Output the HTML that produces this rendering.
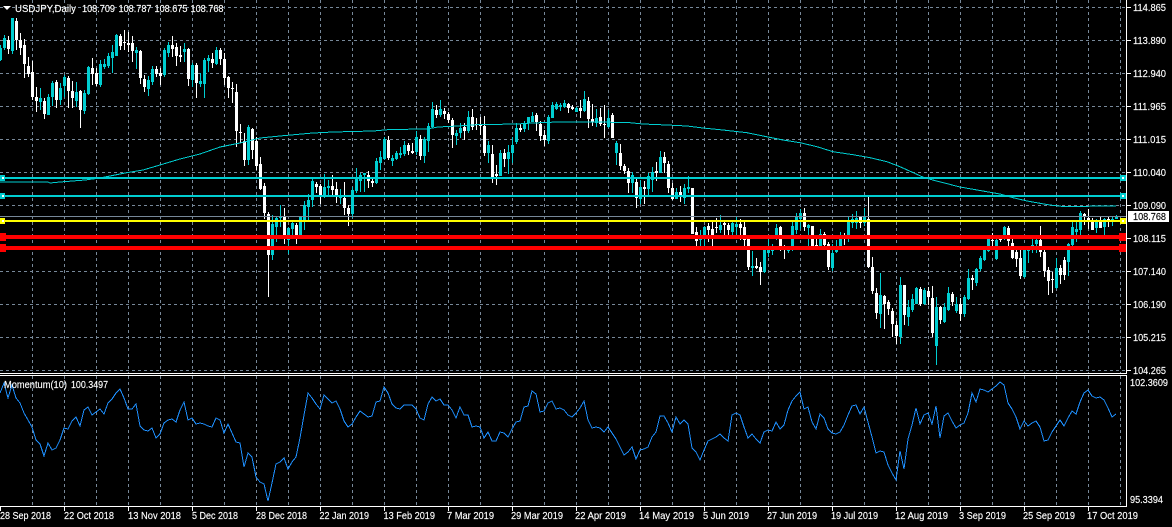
<!DOCTYPE html>
<html><head><meta charset="utf-8"><title>USDJPY,Daily</title>
<style>
html,body{margin:0;padding:0;background:#000;overflow:hidden}
svg{display:block}
.g path{stroke:#778899;stroke-width:1;stroke-dasharray:3 3;fill:none}
.k{shape-rendering:crispEdges}
.k path{fill:#fff}
.k path.c{fill:#00CED1}
text{font-family:"Liberation Sans",sans-serif;font-size:10.5px;fill:#fff;stroke:#fff;stroke-width:.15}
</style></head><body>
<svg xmlns="http://www.w3.org/2000/svg" width="1172" height="527" viewBox="0 0 1172 527">
<rect width="1172" height="527" fill="#000"/>
<g class="g" shape-rendering="crispEdges">
<path d="M0 7.5H1126M0 40.5H1126M0 73.5H1126M0 106.5H1126M0 139.5H1126M0 172.5H1126M0 205.5H1126M0 238.5H1126M0 271.5H1126M0 304.5H1126M0 337.5H1126M0 370.5H1126"/>
<path d="M32.5 0V373M64.5 0V373M96.5 0V373M128.5 0V373M160.5 0V373M192.5 0V373M224.5 0V373M256.5 0V373M288.5 0V373M320.5 0V373M352.5 0V373M384.5 0V373M416.5 0V373M448.5 0V373M480.5 0V373M512.5 0V373M544.5 0V373M576.5 0V373M608.5 0V373M640.5 0V373M672.5 0V373M704.5 0V373M736.5 0V373M768.5 0V373M800.5 0V373M832.5 0V373M864.5 0V373M896.5 0V373M928.5 0V373M960.5 0V373M992.5 0V373M1024.5 0V373M1056.5 0V373M1088.5 0V373M1120.5 0V373"/>
<path d="M32.5 376V506M64.5 376V506M96.5 376V506M128.5 376V506M160.5 376V506M192.5 376V506M224.5 376V506M256.5 376V506M288.5 376V506M320.5 376V506M352.5 376V506M384.5 376V506M416.5 376V506M448.5 376V506M480.5 376V506M512.5 376V506M544.5 376V506M576.5 376V506M608.5 376V506M640.5 376V506M672.5 376V506M704.5 376V506M736.5 376V506M768.5 376V506M800.5 376V506M832.5 376V506M864.5 376V506M896.5 376V506M928.5 376V506M960.5 376V506M992.5 376V506M1024.5 376V506M1056.5 376V506M1088.5 376V506M1120.5 376V506"/>
</g>
<g class="k">
<path class="c" d="M0 45h1V61h-1zM-1 48h3V60h-3zM4 35h1V50h-1zM3 38h3V48h-3z"/>
<path d="M8 36h1V54h-1zM7 40h3V49h-3z"/>
<path class="c" d="M12 18h1V54h-1zM11 18h3V51h-3z"/>
<path d="M16 18h1V50h-1zM15 21h3V40h-3zM20 33h1V55h-1zM19 40h3V48h-3zM24 39h1V78h-1zM23 45h3V64h-3zM28 57h1V77h-1zM27 66h3V74h-3zM32 61h1V100h-1zM31 72h3V97h-3zM36 87h1V112h-1zM35 97h3V101h-3z"/>
<path class="c" d="M40 88h1V110h-1zM39 98h3V102h-3z"/>
<path d="M44 98h1V119h-1zM43 101h3V114h-3z"/>
<path class="c" d="M48 94h1V115h-1zM47 97h3V115h-3zM52 81h1V106h-1zM51 83h3V97h-3z"/>
<path d="M56 80h1V108h-1zM55 82h3V100h-3z"/>
<path class="c" d="M60 83h1V105h-1zM59 88h3V100h-3zM64 75h1V97h-1zM63 77h3V86h-3z"/>
<path d="M68 76h1V108h-1zM67 78h3V91h-3zM72 81h1V108h-1zM71 91h3V98h-3z"/>
<path class="c" d="M76 82h1V107h-1zM75 92h3V101h-3z"/>
<path d="M80 90h1V128h-1zM79 91h3V110h-3z"/>
<path class="c" d="M84 90h1V114h-1zM83 93h3V111h-3zM88 66h1V95h-1zM87 67h3V94h-3z"/>
<path d="M92 58h1V85h-1zM91 68h3V74h-3zM96 68h1V86h-1zM95 73h3V84h-3z"/>
<path class="c" d="M100 60h1V87h-1zM99 64h3V85h-3zM104 59h1V69h-1zM103 64h3V67h-3zM108 53h1V68h-1zM107 56h3V66h-3zM112 45h1V73h-1zM111 52h3V58h-3zM116 34h1V56h-1zM115 35h3V56h-3z"/>
<path d="M120 34h1V50h-1zM119 36h3V46h-3zM124 30h1V50h-1zM123 42h3V43h-3zM128 32h1V52h-1zM127 43h3V45h-3zM132 36h1V62h-1zM131 43h3V51h-3z"/>
<path class="c" d="M136 47h1V69h-1zM135 50h3V53h-3z"/>
<path d="M140 50h1V84h-1zM139 51h3V78h-3zM144 75h1V92h-1zM143 79h3V87h-3z"/>
<path class="c" d="M148 76h1V96h-1zM147 80h3V89h-3zM152 66h1V85h-1zM151 69h3V82h-3z"/>
<path d="M156 66h1V77h-1zM155 69h3V74h-3zM160 68h1V85h-1zM159 73h3V76h-3z"/>
<path class="c" d="M164 48h1V77h-1zM163 50h3V75h-3zM168 42h1V57h-1zM167 45h3V53h-3z"/>
<path d="M172 36h1V57h-1zM171 45h3V49h-3zM176 43h1V66h-1zM175 47h3V56h-3zM180 46h1V62h-1zM179 55h3V57h-3z"/>
<path class="c" d="M184 43h1V62h-1zM183 49h3V52h-3z"/>
<path d="M188 48h1V86h-1zM187 49h3V79h-3z"/>
<path class="c" d="M192 63h1V87h-1zM191 65h3V80h-3z"/>
<path d="M196 63h1V98h-1zM195 65h3V83h-3z"/>
<path class="c" d="M200 73h1V87h-1zM199 81h3V84h-3zM204 58h1V98h-1zM203 60h3V84h-3zM208 55h1V72h-1zM207 58h3V61h-3z"/>
<path d="M212 53h1V68h-1zM211 59h3V63h-3z"/>
<path class="c" d="M216 47h1V65h-1zM215 50h3V64h-3z"/>
<path d="M220 48h1V65h-1zM219 50h3V59h-3zM224 53h1V85h-1zM223 59h3V78h-3zM228 76h1V98h-1zM227 77h3V88h-3zM232 82h1V103h-1zM231 88h3V89h-3zM236 84h1V147h-1zM235 92h3V131h-3zM240 124h1V143h-1zM239 132h3V133h-3zM244 133h1V166h-1zM243 141h3V160h-3z"/>
<path class="c" d="M248 125h1V165h-1zM247 127h3V160h-3z"/>
<path d="M252 128h1V159h-1zM251 129h3V150h-3zM256 137h1V170h-1zM255 141h3V166h-3zM260 157h1V190h-1zM259 164h3V189h-3zM264 183h1V219h-1zM263 186h3V213h-3zM268 212h1V297h-1zM267 214h3V255h-3z"/>
<path class="c" d="M272 215h1V260h-1zM271 224h3V255h-3zM276 217h1V242h-1zM275 218h3V227h-3zM280 205h1V227h-1zM279 216h3V218h-3z"/>
<path d="M284 208h1V244h-1zM283 217h3V239h-3z"/>
<path class="c" d="M288 227h1V254h-1zM287 228h3V240h-3zM292 222h1V238h-1zM291 223h3V229h-3z"/>
<path d="M296 223h1V244h-1zM295 225h3V239h-3z"/>
<path class="c" d="M300 217h1V239h-1zM299 217h3V238h-3zM304 201h1V230h-1zM303 205h3V220h-3zM308 194h1V220h-1zM307 200h3V207h-3zM312 179h1V207h-1zM311 181h3V200h-3z"/>
<path d="M316 182h1V193h-1zM315 184h3V187h-3zM320 184h1V204h-1zM319 186h3V197h-3z"/>
<path class="c" d="M324 174h1V198h-1zM323 187h3V197h-3zM328 180h1V195h-1zM327 186h3V188h-3z"/>
<path d="M332 175h1V195h-1zM331 186h3V190h-3zM336 182h1V203h-1zM335 189h3V197h-3z"/>
<path class="c" d="M340 189h1V204h-1zM339 197h3V198h-3z"/>
<path d="M344 182h1V215h-1zM343 198h3V208h-3zM348 205h1V226h-1zM347 208h3V214h-3z"/>
<path class="c" d="M352 187h1V218h-1zM351 190h3V214h-3zM356 168h1V193h-1zM355 178h3V191h-3zM360 173h1V192h-1zM359 175h3V181h-3zM364 173h1V192h-1zM363 173h3V175h-3z"/>
<path d="M368 171h1V188h-1zM367 175h3V181h-3zM372 177h1V187h-1zM371 181h3V183h-3z"/>
<path class="c" d="M376 158h1V184h-1zM375 161h3V183h-3zM380 151h1V170h-1zM379 157h3V163h-3zM384 137h1V160h-1zM383 139h3V159h-3z"/>
<path d="M388 136h1V160h-1zM387 140h3V158h-3z"/>
<path class="c" d="M392 155h1V166h-1zM391 158h3V161h-3zM396 151h1V160h-1zM395 153h3V159h-3zM400 147h1V158h-1zM399 153h3V155h-3zM404 141h1V156h-1zM403 145h3V154h-3z"/>
<path d="M408 143h1V155h-1zM407 145h3V151h-3zM412 143h1V154h-1zM411 151h3V153h-3z"/>
<path class="c" d="M416 131h1V155h-1zM415 137h3V152h-3z"/>
<path d="M420 135h1V160h-1zM419 139h3V156h-3z"/>
<path class="c" d="M424 137h1V163h-1zM423 139h3V156h-3zM428 123h1V152h-1zM427 126h3V141h-3zM432 102h1V128h-1zM431 109h3V127h-3z"/>
<path d="M436 105h1V118h-1zM435 110h3V115h-3z"/>
<path class="c" d="M440 100h1V117h-1zM439 109h3V115h-3z"/>
<path d="M444 108h1V119h-1zM443 111h3V114h-3zM448 112h1V123h-1zM447 114h3V120h-3zM452 118h1V148h-1zM451 120h3V135h-3z"/>
<path class="c" d="M456 130h1V145h-1zM455 133h3V136h-3zM460 123h1V138h-1zM459 128h3V133h-3z"/>
<path d="M464 123h1V140h-1zM463 127h3V131h-3z"/>
<path class="c" d="M468 111h1V133h-1zM467 117h3V131h-3z"/>
<path d="M472 109h1V130h-1zM471 117h3V127h-3zM476 118h1V130h-1zM475 124h3V125h-3zM480 117h1V135h-1zM479 125h3V126h-3zM484 116h1V156h-1zM483 126h3V153h-3z"/>
<path class="c" d="M488 141h1V163h-1zM487 145h3V153h-3z"/>
<path d="M492 145h1V183h-1zM491 154h3V178h-3zM496 165h1V185h-1zM495 174h3V176h-3z"/>
<path class="c" d="M500 150h1V176h-1zM499 153h3V176h-3z"/>
<path d="M504 149h1V167h-1zM503 153h3V159h-3z"/>
<path class="c" d="M508 145h1V174h-1zM507 152h3V159h-3zM512 137h1V163h-1zM511 145h3V153h-3zM516 123h1V144h-1zM515 128h3V142h-3z"/>
<path d="M520 124h1V132h-1zM519 128h3V130h-3z"/>
<path class="c" d="M524 121h1V132h-1zM523 123h3V129h-3zM528 117h1V130h-1zM527 117h3V123h-3zM532 112h1V122h-1zM531 116h3V122h-3z"/>
<path d="M536 113h1V131h-1zM535 115h3V122h-3zM540 121h1V141h-1zM539 124h3V136h-3zM544 130h1V146h-1zM543 135h3V140h-3z"/>
<path class="c" d="M548 115h1V144h-1zM547 117h3V141h-3zM552 102h1V118h-1zM551 105h3V118h-3zM556 102h1V110h-1zM555 104h3V109h-3zM560 103h1V111h-1zM559 105h3V107h-3zM564 100h1V108h-1zM563 103h3V107h-3z"/>
<path d="M568 103h1V113h-1zM567 104h3V108h-3zM572 105h1V110h-1zM571 107h3V109h-3z"/>
<path class="c" d="M576 107h1V112h-1zM575 108h3V112h-3z"/>
<path d="M580 100h1V118h-1zM579 108h3V111h-3z"/>
<path class="c" d="M584 91h1V112h-1zM583 99h3V111h-3z"/>
<path d="M588 97h1V128h-1zM587 101h3V119h-3zM592 104h1V126h-1zM591 119h3V122h-3z"/>
<path class="c" d="M596 109h1V127h-1zM595 118h3V123h-3z"/>
<path d="M600 108h1V126h-1zM599 117h3V124h-3zM604 105h1V138h-1zM603 124h3V125h-3z"/>
<path class="c" d="M608 110h1V128h-1zM607 118h3V127h-3z"/>
<path d="M612 113h1V138h-1zM611 115h3V138h-3z"/>
<path class="c" d="M616 141h1V165h-1zM615 143h3V153h-3z"/>
<path d="M620 144h1V170h-1zM619 153h3V166h-3zM624 164h1V174h-1zM623 166h3V171h-3zM628 168h1V193h-1zM627 171h3V183h-3z"/>
<path class="c" d="M632 172h1V193h-1zM631 175h3V183h-3z"/>
<path d="M636 179h1V208h-1zM635 182h3V198h-3z"/>
<path class="c" d="M640 180h1V204h-1zM639 187h3V199h-3z"/>
<path d="M644 181h1V204h-1zM643 187h3V189h-3z"/>
<path class="c" d="M648 173h1V195h-1zM647 176h3V189h-3zM652 167h1V192h-1zM651 172h3V180h-3z"/>
<path d="M656 162h1V181h-1zM655 171h3V173h-3z"/>
<path class="c" d="M660 151h1V173h-1zM659 157h3V173h-3z"/>
<path d="M664 152h1V173h-1zM663 157h3V163h-3zM668 161h1V193h-1zM667 164h3V188h-3zM672 183h1V200h-1zM671 188h3V199h-3z"/>
<path class="c" d="M676 188h1V199h-1zM675 192h3V199h-3z"/>
<path d="M680 186h1V202h-1zM679 192h3V197h-3z"/>
<path class="c" d="M684 184h1V204h-1zM683 188h3V198h-3zM688 176h1V193h-1zM687 187h3V189h-3z"/>
<path d="M692 188h1V234h-1zM691 188h3V234h-3zM696 227h1V247h-1zM695 232h3V241h-3z"/>
<path class="c" d="M700 230h1V248h-1zM699 237h3V240h-3zM704 226h1V250h-1zM703 227h3V239h-3z"/>
<path d="M708 223h1V242h-1zM707 226h3V230h-3zM712 222h1V247h-1zM711 229h3V238h-3zM716 218h1V233h-1zM715 227h3V228h-3z"/>
<path class="c" d="M720 215h1V233h-1zM719 225h3V230h-3z"/>
<path d="M724 222h1V236h-1zM723 223h3V225h-3zM728 223h1V239h-1zM727 225h3V230h-3z"/>
<path class="c" d="M732 222h1V238h-1zM731 223h3V232h-3zM736 217h1V235h-1zM735 224h3V227h-3z"/>
<path d="M740 219h1V240h-1zM739 224h3V228h-3zM744 220h1V247h-1zM743 227h3V240h-3zM748 237h1V270h-1zM747 239h3V267h-3z"/>
<path class="c" d="M752 251h1V276h-1zM751 266h3V268h-3z"/>
<path d="M756 258h1V269h-1zM755 266h3V268h-3zM760 262h1V285h-1zM759 267h3V272h-3z"/>
<path class="c" d="M764 247h1V273h-1zM763 249h3V272h-3zM768 237h1V257h-1zM767 250h3V253h-3zM772 244h1V255h-1zM771 246h3V251h-3zM776 224h1V240h-1zM775 228h3V239h-3z"/>
<path d="M780 226h1V251h-1zM779 227h3V247h-3zM784 245h1V259h-1zM783 246h3V249h-3z"/>
<path class="c" d="M788 247h1V253h-1zM787 248h3V251h-3zM792 220h1V251h-1zM791 226h3V250h-3zM796 213h1V234h-1zM795 217h3V230h-3zM800 209h1V229h-1zM799 213h3V219h-3z"/>
<path d="M804 208h1V231h-1zM803 213h3V227h-3z"/>
<path class="c" d="M808 224h1V248h-1zM807 225h3V228h-3z"/>
<path d="M812 226h1V250h-1zM811 226h3V247h-3zM816 238h1V250h-1zM815 245h3V246h-3z"/>
<path class="c" d="M820 229h1V249h-1zM819 234h3V247h-3z"/>
<path d="M824 232h1V250h-1zM823 234h3V245h-3zM828 242h1V270h-1zM827 244h3V267h-3z"/>
<path class="c" d="M832 244h1V271h-1zM831 253h3V268h-3zM836 240h1V253h-1zM835 247h3V252h-3zM840 232h1V249h-1zM839 235h3V248h-3z"/>
<path d="M844 233h1V245h-1zM843 235h3V237h-3z"/>
<path class="c" d="M848 217h1V242h-1zM847 221h3V239h-3zM852 214h1V228h-1zM851 219h3V223h-3zM856 211h1V229h-1zM855 218h3V223h-3z"/>
<path d="M860 216h1V228h-1zM859 216h3V223h-3z"/>
<path class="c" d="M864 208h1V226h-1zM863 216h3V223h-3z"/>
<path d="M868 197h1V268h-1zM867 219h3V267h-3zM872 257h1V294h-1zM871 267h3V291h-3zM876 288h1V319h-1zM875 293h3V313h-3z"/>
<path class="c" d="M880 273h1V328h-1zM879 295h3V314h-3z"/>
<path d="M884 295h1V329h-1zM883 296h3V304h-3zM888 300h1V315h-1zM887 302h3V309h-3zM892 308h1V337h-1zM891 311h3V324h-3zM896 321h1V344h-1zM895 325h3V336h-3z"/>
<path class="c" d="M900 277h1V344h-1zM899 285h3V337h-3z"/>
<path d="M904 285h1V325h-1zM903 285h3V315h-3z"/>
<path class="c" d="M908 300h1V326h-1zM907 307h3V317h-3zM912 294h1V312h-1zM911 299h3V310h-3zM916 287h1V304h-1zM915 288h3V304h-3z"/>
<path d="M920 287h1V306h-1zM919 289h3V304h-3z"/>
<path class="c" d="M924 288h1V305h-1zM923 290h3V304h-3z"/>
<path d="M928 287h1V305h-1zM927 291h3V297h-3zM932 286h1V337h-1zM931 298h3V333h-3z"/>
<path class="c" d="M936 297h1V365h-1zM935 307h3V346h-3z"/>
<path d="M940 306h1V324h-1zM939 307h3V320h-3z"/>
<path class="c" d="M944 303h1V323h-1zM943 307h3V322h-3zM948 287h1V311h-1zM947 293h3V310h-3z"/>
<path d="M952 292h1V306h-1zM951 294h3V302h-3z"/>
<path class="c" d="M956 297h1V313h-1zM955 304h3V311h-3z"/>
<path d="M960 298h1V321h-1zM959 304h3V314h-3z"/>
<path class="c" d="M964 295h1V317h-1zM963 297h3V314h-3zM968 269h1V300h-1zM967 278h3V299h-3z"/>
<path d="M972 275h1V290h-1zM971 278h3V280h-3z"/>
<path class="c" d="M976 268h1V286h-1zM975 269h3V283h-3zM980 256h1V271h-1zM979 258h3V269h-3zM984 248h1V261h-1zM983 249h3V260h-3zM988 235h1V252h-1zM987 238h3V251h-3z"/>
<path d="M992 233h1V247h-1zM991 240h3V241h-3z"/>
<path class="c" d="M996 237h1V260h-1zM995 240h3V259h-3z"/>
<path d="M1000 236h1V242h-1zM999 238h3V240h-3z"/>
<path class="c" d="M1004 226h1V240h-1zM1003 227h3V239h-3z"/>
<path d="M1008 226h1V250h-1zM1007 228h3V241h-3zM1012 239h1V259h-1zM1011 243h3V258h-3zM1016 250h1V267h-1zM1015 252h3V259h-3zM1020 250h1V279h-1zM1019 258h3V276h-3z"/>
<path class="c" d="M1024 246h1V278h-1zM1023 250h3V277h-3zM1028 246h1V263h-1zM1027 249h3V251h-3zM1032 236h1V253h-1zM1031 245h3V249h-3zM1036 236h1V253h-1zM1035 240h3V244h-3z"/>
<path d="M1040 226h1V257h-1zM1039 240h3V252h-3zM1044 250h1V277h-1zM1043 252h3V271h-3zM1048 267h1V295h-1zM1047 270h3V281h-3zM1052 272h1V293h-1zM1051 279h3V280h-3z"/>
<path class="c" d="M1056 258h1V289h-1zM1055 268h3V288h-3z"/>
<path d="M1060 265h1V284h-1zM1059 268h3V275h-3zM1064 257h1V280h-1zM1063 260h3V275h-3z"/>
<path class="c" d="M1068 243h1V276h-1zM1067 244h3V262h-3zM1072 221h1V247h-1zM1071 227h3V245h-3zM1076 220h1V242h-1zM1075 229h3V232h-3zM1080 211h1V238h-1zM1079 213h3V230h-3z"/>
<path d="M1084 213h1V225h-1zM1083 214h3V216h-3zM1088 209h1V229h-1zM1087 218h3V221h-3zM1092 218h1V230h-1zM1091 221h3V230h-3z"/>
<path class="c" d="M1096 219h1V233h-1zM1095 220h3V228h-3z"/>
<path d="M1100 217h1V228h-1zM1099 222h3V228h-3z"/>
<path class="c" d="M1104 218h1V235h-1zM1103 219h3V227h-3z"/>
<path d="M1108 217h1V227h-1zM1107 219h3V222h-3z"/>
<path class="c" d="M1112 216h1V226h-1zM1111 219h3V222h-3zM1116 215h1V219h-1zM1115 216h3V219h-3z"/>
</g>
<polyline fill="none" stroke="#00CED1" stroke-width="1" shape-rendering="crispEdges" points="0,182 48,182 50,183 60,182 85,180 100,178 110,176 125,173 143,170 160,165 180,159 200,154 220,147 240,143 260,138 280,136 302,134 313,133 333,132 373,131 390,129.5 427,129 438,127 458,126 477,124.7 517,124 533,123 558,122 600,122 630,122.7 643,124 667,125 687,126 703,128 723,130 747,132.7 763,136 783,140 800,142.7 817,146.7 833,151.7 853,154.7 870,157.7 887,161.7 900,166.7 925,178 960,187 1000,194 1013,197.7 1027,201 1040,203.3 1050,205 1063,206.5 1116,206"/>
<g shape-rendering="crispEdges">
<rect x="0" y="177" width="1126" height="2" fill="#00CED1"/>
<rect x="0" y="195" width="1126" height="2" fill="#00CED1"/>
<rect x="0" y="216" width="1126" height="1" fill="#778899"/>
<rect x="0" y="220" width="1126" height="2" fill="#FFFF00"/>
<rect x="0" y="235" width="1126" height="4" fill="#FF0000"/>
<rect x="0" y="246" width="1126" height="4" fill="#FF0000"/>
<rect x="0" y="175" width="5" height="6" fill="#00CED1"/><rect x="2" y="177" width="2" height="2" fill="#fff"/>
<rect x="0" y="193" width="5" height="6" fill="#00CED1"/><rect x="2" y="195" width="2" height="2" fill="#fff"/>
<rect x="0" y="218" width="5" height="6" fill="#FFFF00"/><rect x="2" y="220" width="2" height="2" fill="#fff"/>
<rect x="0" y="233" width="6" height="8" fill="#FF0000"/>
<rect x="0" y="244" width="6" height="8" fill="#FF0000"/>
<rect x="1120" y="175" width="6" height="6" fill="#00CED1"/><rect x="1122" y="177" width="2" height="2" fill="#fff"/>
<rect x="1120" y="193" width="6" height="6" fill="#00CED1"/><rect x="1122" y="195" width="2" height="2" fill="#fff"/>
<rect x="1120" y="218" width="6" height="6" fill="#FFFF00"/><rect x="1122" y="220" width="2" height="2" fill="#fff"/>
<rect x="1119" y="233" width="8" height="8" fill="#FF0000"/>
<rect x="1119" y="244" width="8" height="8" fill="#FF0000"/>
<rect x="0" y="373" width="1127" height="1" fill="#fff"/>
<rect x="0" y="375" width="1127" height="1" fill="#fff"/>
<rect x="1126" y="0" width="1" height="374" fill="#fff"/>
<rect x="1126" y="375" width="1" height="132" fill="#fff"/>
<rect x="0" y="506" width="1127" height="1" fill="#fff"/>
<path d="M0 506h1v5h-1zM64 506h1v5h-1zM128 506h1v5h-1zM192 506h1v5h-1zM256 506h1v5h-1zM320 506h1v5h-1zM384 506h1v5h-1zM448 506h1v5h-1zM512 506h1v5h-1zM576 506h1v5h-1zM640 506h1v5h-1zM704 506h1v5h-1zM768 506h1v5h-1zM832 506h1v5h-1zM896 506h1v5h-1zM960 506h1v5h-1zM1024 506h1v5h-1zM1088 506h1v5h-1z" fill="#fff"/>
<path d="M1127 7h4v1h-4zM1127 40h4v1h-4zM1127 73h4v1h-4zM1127 106h4v1h-4zM1127 139h4v1h-4zM1127 172h4v1h-4zM1127 205h4v1h-4zM1127 238h4v1h-4zM1127 271h4v1h-4zM1127 304h4v1h-4zM1127 337h4v1h-4zM1127 370h4v1h-4z" fill="#fff"/>
</g>
<polyline fill="none" stroke="#1E90FF" stroke-width="1" shape-rendering="crispEdges" points="0,393 4,383 8,398 12,385 16,398 20,403 24,413 28,420 32,427 36,440 40,444 44,456 48,443 52,450 56,448 60,440 64,428 68,429 72,421 76,417 80,426 84,410 88,407 92,415 96,412 100,409 104,414 108,403 112,399 116,393 120,389 124,398 128,409 132,409 136,404 140,426 144,430 148,431 152,428 156,438 160,434 164,423 168,420 172,419 176,422 180,410 184,402 188,420 192,418 196,424 200,423 204,424 208,426 212,427 216,418 220,420 224,433 228,424 232,433 236,442 240,443 244,467 248,453 252,457 256,477 260,482 264,484 268,501 272,483 276,464 280,462 284,458 288,469 292,462 296,457 300,438 304,415 308,393 312,398 316,404 320,409 324,395 328,399 332,403 336,401 340,409 344,421 348,427 352,424 356,417 360,411 364,414 368,417 372,416 376,402 380,401 384,387 388,393 392,404 396,408 400,409 404,405 408,405 412,405 416,409 420,418 424,420 428,404 432,397 436,401 440,399 444,405 448,405 452,410 456,418 460,407 464,415 468,415 472,427 476,426 480,427 484,438 488,432 492,441 496,441 500,432 504,433 508,437 512,429 516,422 520,421 524,407 528,406 532,391 536,394 540,412 544,411 548,403 552,401 556,409 560,408 564,410 568,415 572,417 576,413 580,408 584,401 588,420 592,428 596,427 600,428 604,432 608,427 612,433 616,439 620,447 624,455 628,452 632,447 636,459 640,450 644,449 648,447 652,437 656,432 660,416 664,416 668,423 672,432 676,417 680,424 684,420 688,424 692,448 696,452 700,460 704,450 708,441 712,439 716,437 720,434 724,438 728,441 732,415 736,413 740,415 744,427 748,438 752,434 756,439 760,443 764,432 768,430 772,431 776,422 780,429 784,425 788,410 792,401 796,396 800,392 804,409 808,407 812,422 816,429 820,414 824,418 828,429 832,433 836,434 840,432 844,425 848,415 852,406 856,405 860,414 864,407 868,422 872,437 876,453 880,451 884,452 888,465 892,473 896,480 900,451 904,469 908,439 912,425 916,408 920,424 924,415 928,413 932,424 936,406 940,438 944,416 948,413 952,421 956,428 960,425 964,423 968,413 972,393 976,402 980,389 984,390 988,392 992,389 996,386 1000,382 1004,385 1008,403 1012,409 1016,417 1020,429 1024,421 1028,426 1032,423 1036,421 1040,427 1044,441 1048,440 1052,432 1056,426 1060,420 1064,426 1068,418 1072,411 1076,414 1080,402 1084,393 1088,390 1092,396 1096,398 1100,397 1104,400 1108,408 1112,417 1116,414"/>
<polygon points="3,6 11,6 7,10" fill="#fff"/>
<text x="15" y="12" textLength="61" lengthAdjust="spacingAndGlyphs">USDJPY,Daily</text>
<text x="82" y="12" textLength="33" lengthAdjust="spacingAndGlyphs">108.709</text>
<text x="118.5" y="12" textLength="33" lengthAdjust="spacingAndGlyphs">108.787</text>
<text x="154.5" y="12" textLength="33" lengthAdjust="spacingAndGlyphs">108.675</text>
<text x="190.5" y="12" textLength="33" lengthAdjust="spacingAndGlyphs">108.768</text>
<text x="4" y="388" textLength="63" lengthAdjust="spacingAndGlyphs">Momentum(10)</text>
<text x="71" y="388" textLength="37" lengthAdjust="spacingAndGlyphs">100.3497</text>
<g>
<text x="1133" y="11" textLength="33" lengthAdjust="spacingAndGlyphs">114.865</text>
<text x="1133" y="44" textLength="33" lengthAdjust="spacingAndGlyphs">113.890</text>
<text x="1133" y="77" textLength="33" lengthAdjust="spacingAndGlyphs">112.940</text>
<text x="1133" y="110" textLength="33" lengthAdjust="spacingAndGlyphs">111.965</text>
<text x="1133" y="143" textLength="33" lengthAdjust="spacingAndGlyphs">111.015</text>
<text x="1133" y="176" textLength="33" lengthAdjust="spacingAndGlyphs">110.040</text>
<text x="1133" y="209" textLength="33" lengthAdjust="spacingAndGlyphs">109.090</text>
<text x="1133" y="242" textLength="33" lengthAdjust="spacingAndGlyphs">108.115</text>
<text x="1133" y="275" textLength="33" lengthAdjust="spacingAndGlyphs">107.140</text>
<text x="1133" y="308" textLength="33" lengthAdjust="spacingAndGlyphs">106.190</text>
<text x="1133" y="341" textLength="33" lengthAdjust="spacingAndGlyphs">105.215</text>
<text x="1133" y="374" textLength="33" lengthAdjust="spacingAndGlyphs">104.265</text>
<text x="1130" y="386" textLength="38" lengthAdjust="spacingAndGlyphs">102.3609</text>
<text x="1130" y="503" textLength="33" lengthAdjust="spacingAndGlyphs">95.3394</text>
</g>
<rect x="1128" y="211" width="41" height="11" fill="#fff" shape-rendering="crispEdges"/>
<text x="1133" y="220" textLength="33" lengthAdjust="spacingAndGlyphs" style="fill:#000;stroke:#000">108.768</text>
<g>
<text x="0" y="519" textLength="51" lengthAdjust="spacingAndGlyphs">28 Sep 2018</text>
<text x="64" y="519" textLength="50" lengthAdjust="spacingAndGlyphs">22 Oct 2018</text>
<text x="128" y="519" textLength="53" lengthAdjust="spacingAndGlyphs">13 Nov 2018</text>
<text x="192" y="519" textLength="46" lengthAdjust="spacingAndGlyphs">5 Dec 2018</text>
<text x="256" y="519" textLength="51" lengthAdjust="spacingAndGlyphs">28 Dec 2018</text>
<text x="319.5" y="519" textLength="49.5" lengthAdjust="spacingAndGlyphs">22 Jan 2019</text>
<text x="383.5" y="519" textLength="51.5" lengthAdjust="spacingAndGlyphs">13 Feb 2019</text>
<text x="447" y="519" textLength="47" lengthAdjust="spacingAndGlyphs">7 Mar 2019</text>
<text x="511" y="519" textLength="52" lengthAdjust="spacingAndGlyphs">29 Mar 2019</text>
<text x="575" y="519" textLength="51" lengthAdjust="spacingAndGlyphs">22 Apr 2019</text>
<text x="639" y="519" textLength="55" lengthAdjust="spacingAndGlyphs">14 May 2019</text>
<text x="703" y="519" textLength="46" lengthAdjust="spacingAndGlyphs">5 Jun 2019</text>
<text x="767" y="519" textLength="50" lengthAdjust="spacingAndGlyphs">27 Jun 2019</text>
<text x="831" y="519" textLength="47" lengthAdjust="spacingAndGlyphs">19 Jul 2019</text>
<text x="895" y="519" textLength="53" lengthAdjust="spacingAndGlyphs">12 Aug 2019</text>
<text x="959" y="519" textLength="47" lengthAdjust="spacingAndGlyphs">3 Sep 2019</text>
<text x="1023" y="519" textLength="52" lengthAdjust="spacingAndGlyphs">25 Sep 2019</text>
<text x="1087" y="519" textLength="51" lengthAdjust="spacingAndGlyphs">17 Oct 2019</text>
</g>
</svg>
</body></html>
